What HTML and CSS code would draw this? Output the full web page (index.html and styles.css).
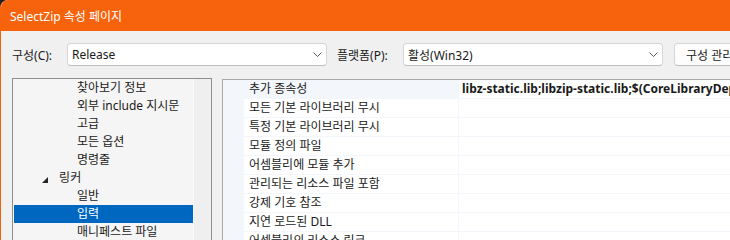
FILE: index.html
```html
<!DOCTYPE html>
<html lang="ko">
<head>
  <meta charset="UTF-8">
  <title>SelectZip 속성 페이지</title>
  <link rel="stylesheet" href="styles.css">
</head>
<body>
  <div class="window">
    <div class="titlebar">
      <span class="title">SelectZip 속성 페이지</span>
    </div>

    <div class="dialog">
      <div class="toolbar">
        <span class="field-label">구성(C):</span>
        <div class="combo">
          <span class="combo-text">Release</span>
          <svg class="chevron" width="9" height="5" viewBox="0 0 9 5"><polyline points="0.5,0.5 4.5,4.5 8.5,0.5" fill="none" stroke="#5c5c5c" stroke-width="1"/></svg>
        </div>
        <span class="field-label platform">플랫폼(P):</span>
        <div class="combo">
          <span class="combo-text">활성(Win32)</span>
          <svg class="chevron" width="9" height="5" viewBox="0 0 9 5"><polyline points="0.5,0.5 4.5,4.5 8.5,0.5" fill="none" stroke="#5c5c5c" stroke-width="1"/></svg>
        </div>
        <button class="btn">구성 관리자...</button>
      </div>

      <div class="panes">
        <div class="tree">
          <ul class="tree-list">
            <li class="node level2">찾아보기 정보</li>
            <li class="node level2">외부 include 지시문</li>
            <li class="node level2">고급</li>
            <li class="node level2">모든 옵션</li>
            <li class="node level2">명령줄</li>
            <li class="node level1">
              <svg class="expander" width="6" height="6" viewBox="0 0 6 6"><polygon points="6,0 6,6 0,6" fill="#262626"/></svg>
              링커
            </li>
            <li class="node level2">일반</li>
            <li class="node level2 selected">입력</li>
            <li class="node level2">매니페스트 파일</li>
          </ul>
          <div class="scrollbar"></div>
        </div>

        <div class="grid">
          <div class="row current">
            <div class="name">추가 종속성</div>
            <div class="value changed">libz-static.lib;libzip-static.lib;$(CoreLibraryDependencies);%(AdditionalDependencies)</div>
          </div>
          <div class="row"><div class="name">모든 기본 라이브러리 무시</div><div class="value"></div></div>
          <div class="row"><div class="name">특정 기본 라이브러리 무시</div><div class="value"></div></div>
          <div class="row"><div class="name">모듈 정의 파일</div><div class="value"></div></div>
          <div class="row"><div class="name">어셈블리에 모듈 추가</div><div class="value"></div></div>
          <div class="row"><div class="name">관리되는 리소스 파일 포함</div><div class="value"></div></div>
          <div class="row"><div class="name">강제 기호 참조</div><div class="value"></div></div>
          <div class="row"><div class="name">지연 로드된 DLL</div><div class="value"></div></div>
          <div class="row"><div class="name">어셈블리의 리소스 링크</div><div class="value"></div></div>
        </div>
      </div>
    </div>
  </div>
</body>
</html>
```

FILE: styles.css
```css
body {
  margin: 0;
  background: #1f1f1f;
  font-family: 'Noto Sans', 'Noto Sans CJK KR', sans-serif;
  font-size: 12px;
  color: #1a1a1a;
}
.window {
  width: 730px;
  height: 240px;
  overflow: hidden;
  box-sizing: border-box;
  background: #f0f0f0;
  border-left: 1px solid #f7630c;
  border-top-left-radius: 8px;
}
.titlebar {
  height: 31px;
  display: flex;
  align-items: center;
  padding-left: 9px;
  background: #f7630c;
  color: #fff;
}
.dialog {
  padding: 12px 0 0 11px;
}
.toolbar {
  display: flex;
  align-items: center;
  height: 23px;
}
.field-label {
  width: 55px;
  flex-shrink: 0;
}
.field-label.platform {
  width: 66px;
  margin-left: 10px;
}
.combo {
  width: 260px;
  height: 23px;
  flex-shrink: 0;
  box-sizing: border-box;
  display: flex;
  align-items: center;
  justify-content: space-between;
  padding: 0 4px;
  background: #fff;
  border: 1px solid #d6d6d6;
  border-bottom-color: #bcbcbc;
  border-radius: 4px;
}
.btn {
  margin-left: 11px;
  height: 23px;
  width: 110px;
  flex-shrink: 0;
  padding: 0 0 0 11px;
  text-align: left;
  font: inherit;
  color: inherit;
  background: #fdfdfd;
  border: 1px solid #d6d6d6;
  border-bottom-color: #bcbcbc;
  border-radius: 4px;
}
.panes {
  display: flex;
  margin-top: 12px;
}
.tree {
  width: 200px;
  height: 170px;
  flex-shrink: 0;
  box-sizing: border-box;
  display: flex;
  background: #f5f5f5;
  border: 1px solid #8f8f8f;
}
.tree-list {
  flex: 1;
  margin: 0;
  padding: 0 0 0 1px;
  list-style: none;
}
.node {
  height: 18px;
  line-height: 18px;
  white-space: nowrap;
}
.level1 {
  padding-left: 28px;
}
.level2 {
  padding-left: 63px;
}
.expander {
  margin-right: 8px;
  vertical-align: -1px;
}
.selected {
  background: #0067c0;
  color: #fff;
}
.scrollbar {
  width: 17px;
  background: #efefef;
  border-left: 1px solid #fafafa;
}
.grid {
  flex: 1;
  height: 170px;
  margin: 1px 0 0 10px;
  padding-left: 21px;
  background: #f3f6fb;
  border: 1px solid #a8a8a8;
  border-right: none;
}
.row {
  display: flex;
  height: 18px;
  line-height: 18px;
  margin-bottom: 1px;
}
.name {
  width: 214px;
  flex-shrink: 0;
  box-sizing: border-box;
  padding-left: 5px;
  background: #fff;
  white-space: nowrap;
}
.row.current .name {
  background: transparent;
}
.value {
  flex: 1;
  margin-left: 1px;
  padding-left: 3px;
  background: #fff;
  white-space: nowrap;
  overflow: hidden;
}
.value.changed {
  font-weight: bold;
}
```
